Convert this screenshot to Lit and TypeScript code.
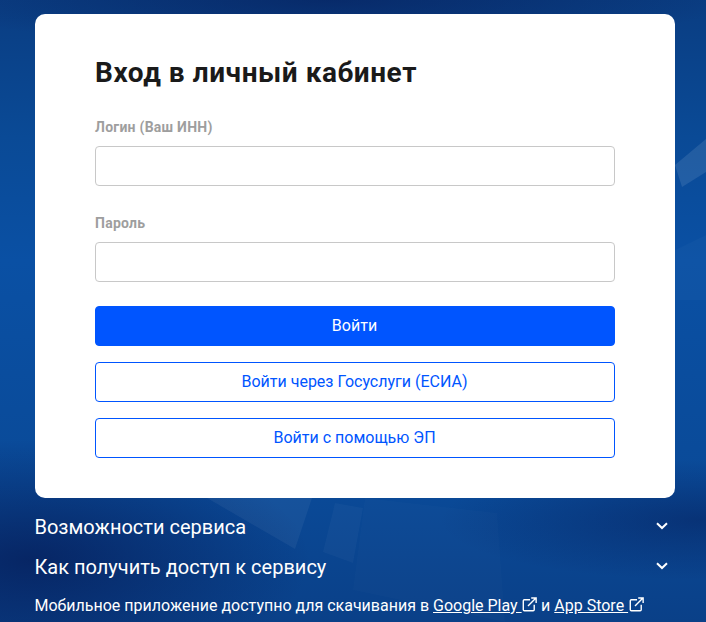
import { LitElement, html, css, svg } from "lit";
import { customElement } from "lit/decorators.js";

const chevron = html`<svg class="chev" viewBox="0 0 12 8" width="12" height="8" fill="none" stroke="#fff" stroke-width="2"><path d="M1 1.2 6 6l5-4.8"/></svg>`;
const ext = html`<svg class="ext" viewBox="0 0 14 14" width="15" height="15" fill="none" stroke="#fff" stroke-width="1.3"><path d="M7.5 2.6H2.2a1 1 0 0 0-1 1v8.2a1 1 0 0 0 1 1h8.2a1 1 0 0 0 1-1V7.2"/><path d="M5.6 8.4 13 1M8.6.9h4.6v4.6"/></svg>`;

@customElement("app-root")
export class AppRoot extends LitElement {
  static styles = css`
    :host { display: block; width: 706px; height: 622px; overflow: hidden; position: relative; font-family: Roboto, "Liberation Sans", sans-serif;
      background:
        radial-gradient(280px 120px at 30px 560px, rgba(6,30,90,.8), rgba(6,30,90,0)),
        radial-gradient(400px 50px at 330px 0px, rgba(6,30,90,.6), rgba(6,30,90,0)),
        radial-gradient(260px 60px at 700px 520px, rgba(6,30,90,.5), rgba(6,30,90,0)),
        linear-gradient(180deg, #0a3d82 0%, #0a4a96 22%, #0a50a4 42%, #0a4a98 78%, #0a4088 100%); }
    .bg { position: absolute; inset: 0; width: 706px; height: 622px; }
    .page { position: relative; display: flex; flex-direction: column; padding: 14px 31px 0 35px; }
    .card { background: #fff; border-radius: 10px; padding: 41px 60px 0; height: 484px; box-sizing: border-box; display: flex; flex-direction: column; }
    h1 { margin: 0; font-size: 28px; line-height: 36px; font-weight: 700; color: #1a1a1a; letter-spacing: 0.55px; }
    .lab { font-size: 14px; line-height: 20px; font-weight: 700; color: #9e9e9e; margin-bottom: 9px; letter-spacing: 0.25px; }
    .first { margin-top: 26px; }
    .second { margin-top: 27px; }
    .inp { height: 40px; border: 1px solid #c8c8c8; border-radius: 4px; box-sizing: border-box; }
    .btn { height: 40px; border-radius: 4px; box-sizing: border-box; display: flex; align-items: center; justify-content: center; font-size: 16px; border: 1px solid #0055ff; color: #0055ff; margin-top: 16px; padding: 0 1px 2px 0; }
    .primary { background: #0055ff; color: #fff; margin-top: 24px; }
    .row { display: flex; justify-content: space-between; align-items: center; color: #fff; font-size: 20px; line-height: 28px; height: 28px; }
    .row span { margin-left: -0.5px; }
    .row.a { margin-top: 15px; }
    .row.b { margin-top: 12px; }
    .chev { margin-right: 7px; margin-top: -3px; }
    .note { margin-top: 14px; margin-left: -0.5px; color: #fff; font-size: 16px; line-height: 22px; white-space: nowrap; }
    .note a { color: #fff; text-decoration: underline; }
    .ext { vertical-align: -1px; margin-left: 0.5px; }
  `;

  render() {
    return html`
      <svg class="bg" viewBox="0 0 706 622">
        ${svg`
          <polygon points="675,165 706,139 706,172 682,187" fill="#fff" opacity=".1"/>
          <polygon points="675,250 706,235 706,300 675,300" fill="#fff" opacity=".025"/>
          <polygon points="207,498 312,498 295,549" fill="#fff" opacity=".05"/>
          <polygon points="335,503 363,508 353,563 323,552" fill="#fff" opacity=".03"/>
          <polygon points="365,498 497,513 505,622 353,590" fill="#fff" opacity=".015"/>
        `}
      </svg>
      <div class="page">
        <div class="card">
          <h1>Вход в личный кабинет</h1>
          <div class="lab first">Логин (Ваш ИНН)</div>
          <div class="inp"></div>
          <div class="lab second">Пароль</div>
          <div class="inp"></div>
          <div class="btn primary">Войти</div>
          <div class="btn">Войти через Госуслуги (ЕСИА)</div>
          <div class="btn">Войти с помощью ЭП</div>
        </div>
        <div class="row a"><span>Возможности сервиса</span>${chevron}</div>
        <div class="row b"><span>Как получить доступ к сервису</span>${chevron}</div>
        <div class="note">Мобильное приложение доступно для скачивания в <a href="#">Google Play ${ext}</a> и <a href="#">App Store ${ext}</a></div>
      </div>
    `;
  }
}
